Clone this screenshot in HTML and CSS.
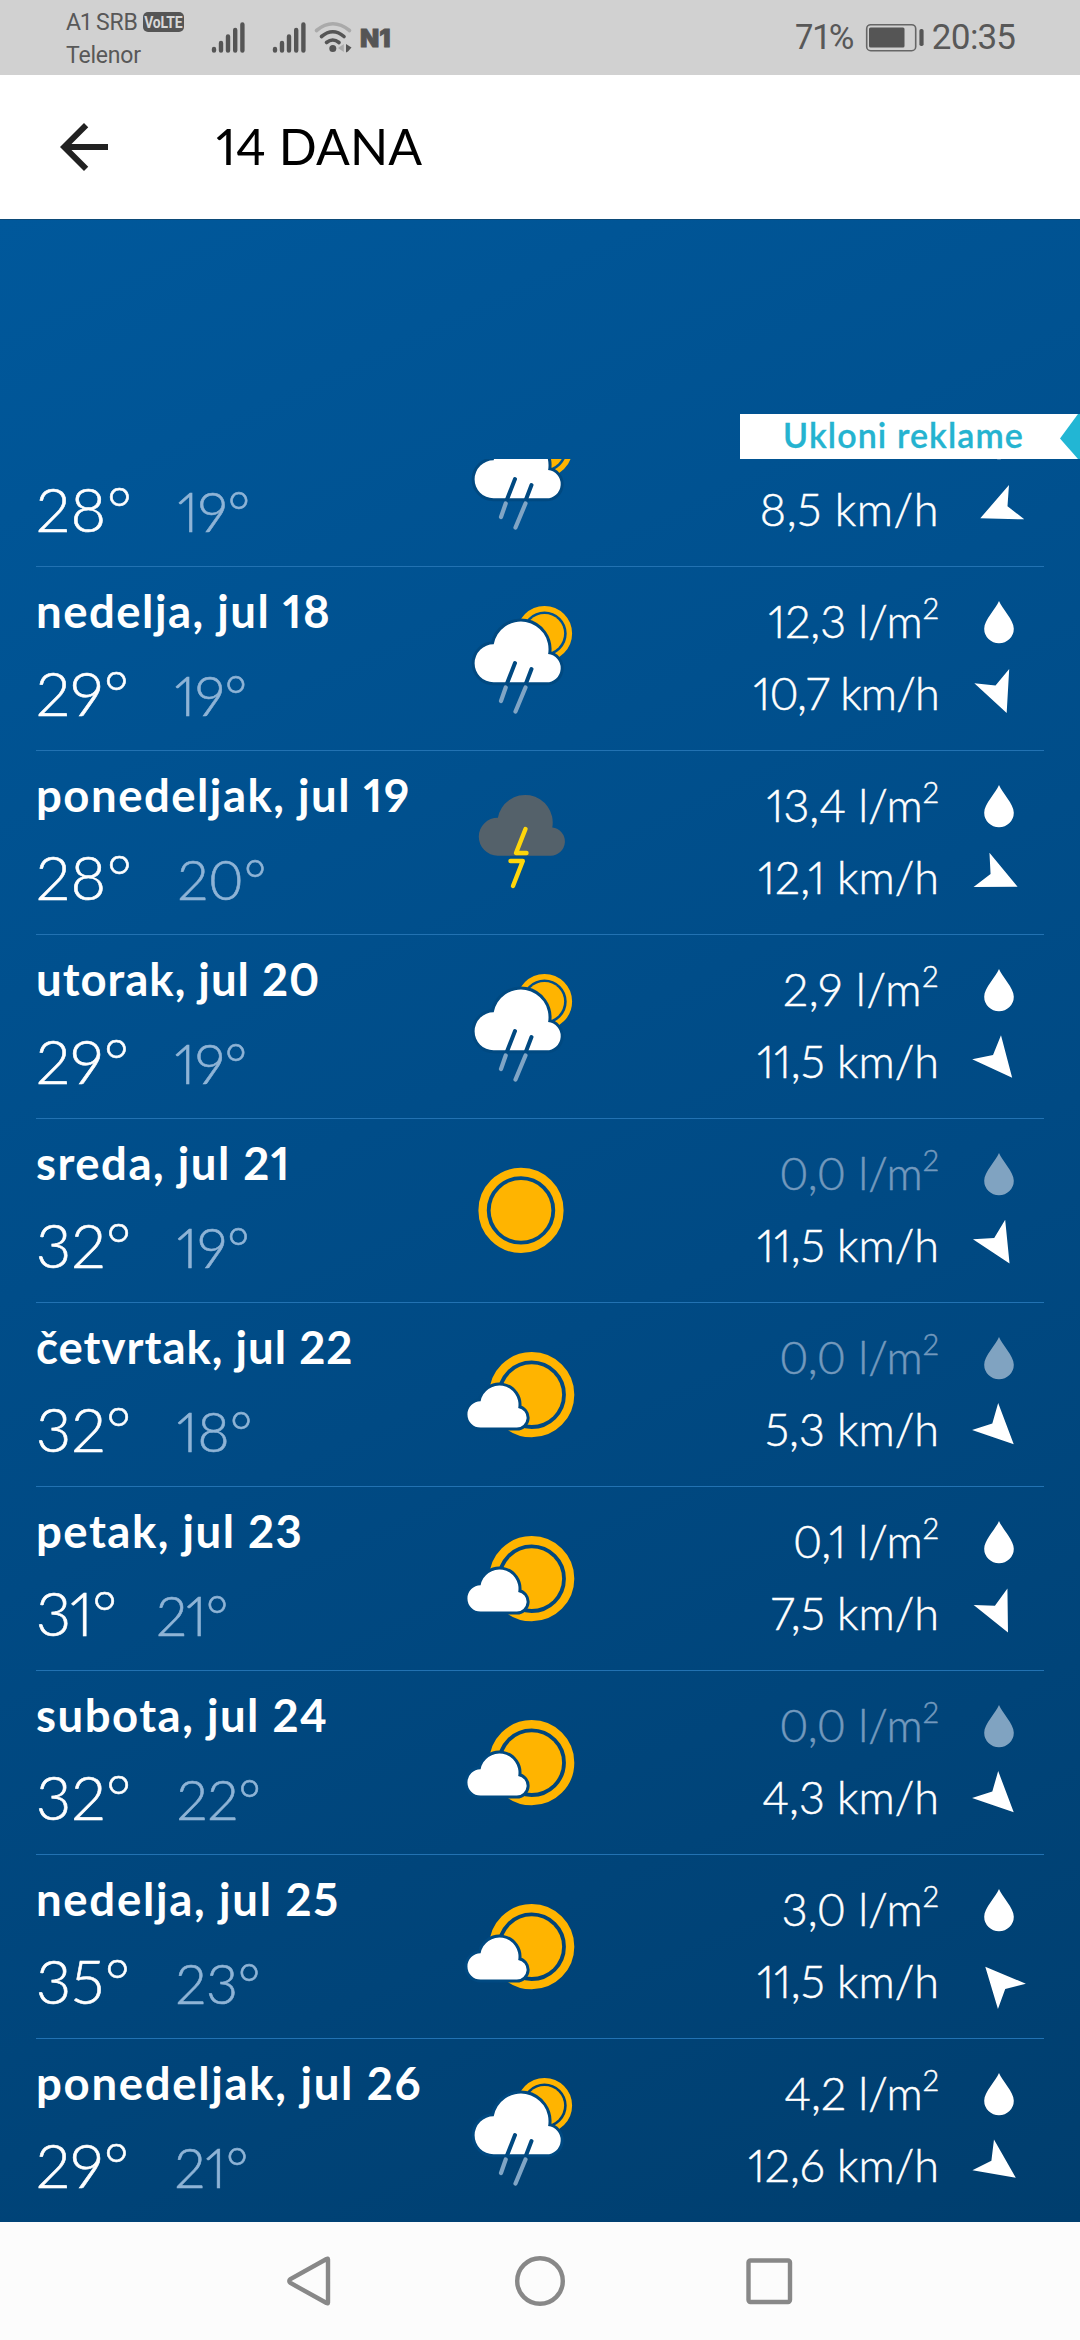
FILE: index.html
```html
<!DOCTYPE html>
<html lang="sr-Latn">
<head>
<meta charset="utf-8">
<title>14 dana</title>
<link rel="stylesheet" href="styles.css">
</head>
<body>
<svg class="sprite" aria-hidden="true">
  <symbol id="sun-rain" viewBox="0 0 130 184">
    <circle cx="87.5" cy="67.6" r="24.9" fill="none" stroke="#ffb400" stroke-width="5.4"/>
    <circle cx="87.5" cy="67.6" r="19.6" fill="#ffb400"/>
    <path d="M36.500 116.300A19 19 0 1 1 36.7 78.3A27.5 27.500 0 0 1 91.100 88A14.200 14.200 0 0 1 89 116.300Z" fill="#fff" stroke="#004981" stroke-width="6" paint-order="stroke"/>
    <path d="M58 97L49 120M74.500 103L68 120" stroke="#004981" stroke-width="4" stroke-linecap="round"/>
    <path d="M48.700 121.500L44 135M68.500 121.500L58.500 145.500" stroke="#80a5c5" stroke-width="4.2" stroke-linecap="round"/>
  </symbol>
  <symbol id="storm" viewBox="0 0 130 184">
    <path d="M40.700 105.700A19 19 0 1 1 40.900 67.700A27.500 27.500 0 0 1 95.300 77.400A14.200 14.200 0 0 1 93.200 105.700Z" fill="#54616a"/>
    <path d="M68.500 79L59 103H69.500M53.500 111H65.800L56 136" fill="none" stroke="#ffd60a" stroke-width="4.4" stroke-linecap="round" stroke-linejoin="round"/>
  </symbol>
  <symbol id="sun" viewBox="0 0 130 184">
    <circle cx="64" cy="92.400" r="38.400" fill="none" stroke="#ffb400" stroke-width="8.400"/>
    <circle cx="64" cy="92.400" r="30.400" fill="#ffb400"/>
  </symbol>
  <symbol id="sun-cloud" viewBox="0 0 130 184">
    <circle cx="74.700" cy="92.700" r="38.400" fill="none" stroke="#ffb400" stroke-width="8.400"/>
    <circle cx="74.700" cy="92.700" r="30.400" fill="#ffb400"/>
    <path d="M23.500 125.500A13.100 13.100 0 0 1 23.600 99.300A19 19 0 0 1 61.200 106A9.800 9.800 0 0 1 59.700 125.500Z" fill="#fff" stroke="#004981" stroke-width="6" paint-order="stroke"/>
  </symbol>
  <symbol id="drop" viewBox="0 0 60 72">
    <path d="M30 15C33 22.500 44.800 34 44.800 42.700A14.800 14.500 0 0 1 15.200 42.700C15.200 34 27 22.500 30 15Z"/>
  </symbol>
  <symbol id="arrow" viewBox="0 0 60 72">
    <path d="M30 15.500L48.800 55.300L30 45.300L11.200 55.300Z"/>
  </symbol>
</svg>

<header class="status">
  <div class="carriers">
    <div class="carrier">A1 SRB <span class="volte"><span>VoLTE</span></span></div>
    <div class="carrier">Telenor</div>
  </div>
  <svg class="signals" width="150" height="75" viewBox="0 0 150 75">
    <g stroke="#555" stroke-width="4.400" stroke-linecap="round">
      <path d="M6 50.500V49M13 50.500V43M20 50.500V36.500M27.200 50.500V30M34.400 50.500V24.500"/>
      <path d="M67 50.500V49M74 50.500V43M81 50.500V36.500M88.200 50.500V30M95.400 50.500V24.500"/>
    </g>
    <g fill="none" stroke="#555" stroke-width="3.600" stroke-linecap="round">
      <path d="M108.500 30.500Q124.800 17 141.500 30.500" stroke="#aaa"/>
      <path d="M113.500 36.500Q124.800 27 136 36.500"/>
      <path d="M118.500 42.500Q124.800 37.500 131 42.500"/>
    </g>
    <circle cx="124.800" cy="48.500" r="3.500" fill="#555"/>
    <path d="M135.800 44V52L130 48Z" fill="#aaa"/>
    <path d="M138 44L143.500 47.500L140 51.500L138 52.500Z" fill="#555"/>
  </svg>
  <span class="network">N1</span>
  <span class="percent">71%</span>
  <svg class="battery" width="60" height="75" viewBox="0 0 60 75">
    <rect x="2.700" y="24.700" width="49" height="26" rx="4" fill="none" stroke="#666" stroke-width="1.600"/>
    <rect x="5" y="27.500" width="35.500" height="20" rx="1.500" fill="#555"/>
    <rect x="55.400" y="29" width="4.200" height="17" rx="1.800" fill="#555"/>
  </svg>
  <span class="time">20:35</span>
</header>

<nav class="appbar">
  <svg width="72" height="72" viewBox="0 0 24 24"><path d="M20 11H7.830l5.590-5.590L12 4l-8 8 8 8 1.410-1.410L7.830 13H20z" fill="#212121"/></svg>
  <h1>14 DANA</h1>
</nav>

<main class="forecast">
  <div class="ad-slot">
    <div class="remove-ads"><span>Ukloni reklame</span>
      <svg width="20" height="45" viewBox="0 0 20 45"><path d="M20 0H18L0 24.500L18 45H20Z" fill="#22b6d4"/></svg>
    </div>
  </div>
  <div class="days">
    <section class="day first">
      <div class="info"><div class="temps"><span class="high">28°</span><span class="low">19°</span></div></div>
      <svg class="sky"><use href="#sun-rain"/></svg>
      <div class="values"><p class="wind">8,5 km/h</p></div>
      <div class="marks"><svg><use href="#drop"/></svg><svg><use href="#arrow" transform="rotate(246 30 36)"/></svg></div>
    </section>
    <section class="day">
      <div class="info"><h2>nedelja, jul 18</h2><div class="temps"><span class="high">29°</span><span class="low">19°</span></div></div>
      <svg class="sky"><use href="#sun-rain"/></svg>
      <div class="values"><p>12,3 l/m<sup>2</sup></p><p class="tight">10,7 km/h</p></div>
      <div class="marks"><svg><use href="#drop"/></svg><svg><use href="#arrow" transform="rotate(158 30 36)"/></svg></div>
    </section>
    <section class="day">
      <div class="info"><h2>ponedeljak, jul 19</h2><div class="temps"><span class="high">28°</span><span class="low">20°</span></div></div>
      <svg class="sky"><use href="#storm"/></svg>
      <div class="values"><p>13,4 l/m<sup>2</sup></p><p>12,1 km/h</p></div>
      <div class="marks"><svg><use href="#drop"/></svg><svg><use href="#arrow" transform="rotate(115 30 36)"/></svg></div>
    </section>
    <section class="day">
      <div class="info"><h2 class="tight">utorak, jul 20</h2><div class="temps"><span class="high">29°</span><span class="low">19°</span></div></div>
      <svg class="sky"><use href="#sun-rain"/></svg>
      <div class="values"><p class="wide">2,9 l/m<sup>2</sup></p><p>11,5 km/h</p></div>
      <div class="marks"><svg><use href="#drop"/></svg><svg><use href="#arrow" transform="rotate(140 30 36)"/></svg></div>
    </section>
    <section class="day">
      <div class="info"><h2>sreda, jul 21</h2><div class="temps"><span class="high">32°</span><span class="low">19°</span></div></div>
      <svg class="sky"><use href="#sun"/></svg>
      <div class="values"><p class="dry">0,0 l/m<sup>2</sup></p><p>11,5 km/h</p></div>
      <div class="marks"><svg class="dry"><use href="#drop"/></svg><svg><use href="#arrow" transform="rotate(149 30 36)"/></svg></div>
    </section>
    <section class="day">
      <div class="info"><h2 class="tight">četvrtak, jul 22</h2><div class="temps"><span class="high">32°</span><span class="low">18°</span></div></div>
      <svg class="sky"><use href="#sun-cloud"/></svg>
      <div class="values"><p class="dry">0,0 l/m<sup>2</sup></p><p>5,3 km/h</p></div>
      <div class="marks"><svg class="dry"><use href="#drop"/></svg><svg><use href="#arrow" transform="rotate(134 30 36)"/></svg></div>
    </section>
    <section class="day">
      <div class="info"><h2>petak, jul 23</h2><div class="temps narrow"><span class="high">31°</span><span class="low">21°</span></div></div>
      <svg class="sky"><use href="#sun-cloud"/></svg>
      <div class="values"><p>0,1 l/m<sup>2</sup></p><p>7,5 km/h</p></div>
      <div class="marks"><svg><use href="#drop"/></svg><svg><use href="#arrow" transform="rotate(154 30 36)"/></svg></div>
    </section>
    <section class="day">
      <div class="info"><h2>subota, jul 24</h2><div class="temps"><span class="high">32°</span><span class="low">22°</span></div></div>
      <svg class="sky"><use href="#sun-cloud"/></svg>
      <div class="values"><p class="dry">0,0 l/m<sup>2</sup></p><p>4,3 km/h</p></div>
      <div class="marks"><svg class="dry"><use href="#drop"/></svg><svg><use href="#arrow" transform="rotate(134 30 36)"/></svg></div>
    </section>
    <section class="day">
      <div class="info"><h2 class="wide">nedelja, jul 25</h2><div class="temps"><span class="high">35°</span><span class="low">23°</span></div></div>
      <svg class="sky"><use href="#sun-cloud"/></svg>
      <div class="values"><p>3,0 l/m<sup>2</sup></p><p>11,5 km/h</p></div>
      <div class="marks"><svg><use href="#drop"/></svg><svg><use href="#arrow" transform="rotate(318 30 36)"/></svg></div>
    </section>
    <section class="day">
      <div class="info"><h2 class="wide">ponedeljak, jul 26</h2><div class="temps"><span class="high">29°</span><span class="low">21°</span></div></div>
      <svg class="sky"><use href="#sun-rain"/></svg>
      <div class="values"><p>4,2 l/m<sup>2</sup></p><p>12,6 km/h</p></div>
      <div class="marks"><svg><use href="#drop"/></svg><svg><use href="#arrow" transform="rotate(125 30 36)"/></svg></div>
    </section>
  </div>
</main>

<footer class="navbar">
  <svg width="60" height="60" viewBox="0 0 60 60"><path d="M47 8.500V51.500Q47 53 45.500 52L9.500 32Q7 30 9.500 28L45.500 8Q47 7 47 8.500Z"/></svg>
  <svg width="60" height="60" viewBox="0 0 60 60"><circle cx="30" cy="30" r="22.800"/></svg>
  <svg width="60" height="60" viewBox="0 0 60 60"><rect x="9.500" y="9.500" width="41.500" height="41.500" rx="2"/></svg>
</footer>
</body>
</html>
```
FILE: styles.css
```css
* { box-sizing: border-box; }

body {
  margin: 0;
  width: 1080px;
  height: 2340px;
  overflow: hidden;
  display: flex;
  flex-direction: column;
  font-family: Lato, "Open Sans", sans-serif;
  font-feature-settings: "pnum";
  background: #fcfcfc;
}

h1, h2, p { margin: 0; }
.sprite { position: absolute; width: 0; height: 0; }

/* status bar */
.status {
  height: 75px;
  flex: none;
  display: flex;
  align-items: center;
  padding: 0 65px 0 66px;
  background: #d1d1d1;
  color: #585858;
  font-family: Roboto, sans-serif;
  font-weight: 400;
}
.carriers { width: 142px; padding-top: 2px; }
.carrier {
  display: flex;
  align-items: center;
  height: 33px;
  font-size: 23px;
  white-space: pre;
  letter-spacing: -0.2px;
}
.volte {
  display: flex;
  align-items: center;
  justify-content: center;
  width: 41px;
  height: 20px;
  border-radius: 5px;
  background: #555;
  color: #d8d8d8;
  font-size: 17px;
  font-weight: 700;
}
.volte span { transform: scaleX(0.82); }
.signals { flex: none; }
.network {
  font-family: Inter, sans-serif;
  font-size: 25px;
  font-weight: 900;
  color: #555;
  width: 36px;
  margin-left: 2px;
  -webkit-text-stroke: 0.8px currentColor;
}
.percent { margin-left: auto; font-size: 35px; letter-spacing: 0.2px; }
.battery { margin: 0 8px 0 9px; }
.time { font-size: 35px; letter-spacing: -0.9px; }

/* title bar */
.appbar {
  height: 144px;
  flex: none;
  display: flex;
  align-items: center;
  padding: 0 0 2px 48px;
  background: #fff;
}
.appbar svg { margin-top: 2px; }
.appbar h1 {
  margin-left: 96px;
  font-size: 50px;
  font-weight: 400;
  color: #000;
  letter-spacing: 0.1px;
}

/* forecast */
.forecast {
  height: 2003px;
  flex: none;
  background: linear-gradient(155deg, #00589b 0%, #004a84 55%, #003e6e 100%);
  border-top: 1px solid #0c4a78;
  color: #fff;
}
.ad-slot {
  height: 239px;
  display: flex;
  align-items: flex-end;
  justify-content: flex-end;
}
.remove-ads {
  display: flex;
  align-items: center;
  justify-content: flex-end;
  width: 340px;
  height: 45px;
  background: #fff;
  color: #25b3d0;
  font-size: 34px;
  font-weight: 600;
  letter-spacing: 1.1px;
  line-height: 41px;
  -webkit-text-stroke: 0.3px currentColor;
}
.remove-ads span { height: 45px; }
.remove-ads svg { margin-left: 36px; }

.days {
  height: 1763px;
  overflow: hidden;
  padding: 0 36px;
  display: flex;
  flex-direction: column;
  justify-content: flex-end;
}
.day {
  flex: none;
  height: 184px;
  display: grid;
  grid-template-columns: 421px 130px 1fr 30px 75px;
  border-top: 1px solid #2272b2;
}
.info { padding-top: 13px; }
.info h2 {
  height: 60px;
  line-height: 61px;
  font-size: 45.5px;
  font-weight: 700;
  letter-spacing: 1.5px;
  white-space: nowrap;
}
.info h2.tight { letter-spacing: 1px; }
.info h2.wide { letter-spacing: 1.7px; }
.first .info { padding-top: 73px; }
.temps {
  display: flex;
  align-items: baseline;
  gap: 45px;
  padding-top: 13px;
  line-height: 80px;
}
.temps.narrow { gap: 40px; }
.high { font-size: 61px; font-weight: 300; letter-spacing: 0.5px; -webkit-text-stroke: 0.6px currentColor; }
.temps.narrow .high, .temps.narrow .low { letter-spacing: -1px; }
.low { font-size: 55px; font-weight: 300; color: #8fb4d6; -webkit-text-stroke: 0.6px currentColor; }

.sky { width: 130px; height: 184px; margin-top: -1px; }
.values { padding-top: 18px; text-align: right; }
.values p {
  height: 72px;
  line-height: 72px;
  font-size: 45px;
  font-weight: 300;
  white-space: nowrap;
  -webkit-text-stroke: 0.5px currentColor;
}
.values .tight { letter-spacing: -0.8px; }
.values .wide { letter-spacing: 0.6px; }
.first .values { padding-top: 90px; }
.first .values p { letter-spacing: 0.6px; }
.values sup {
  font-size: 29px;
  line-height: 0;
  vertical-align: 19px;
}
.marks { grid-column: 5; padding-top: 19px; display: flex; flex-direction: column; align-items: flex-start; }
.marks svg { width: 60px; height: 72px; overflow: visible; fill: #fff; }
.values .dry { color: #7399bd; }
.marks .dry { fill: #80a3c1; }

/* system navigation */
.navbar {
  height: 118px;
  display: flex;
  justify-content: center;
  align-items: center;
  gap: 169px;
}
.navbar svg { fill: none; stroke: #888; stroke-width: 4.4; }
```
